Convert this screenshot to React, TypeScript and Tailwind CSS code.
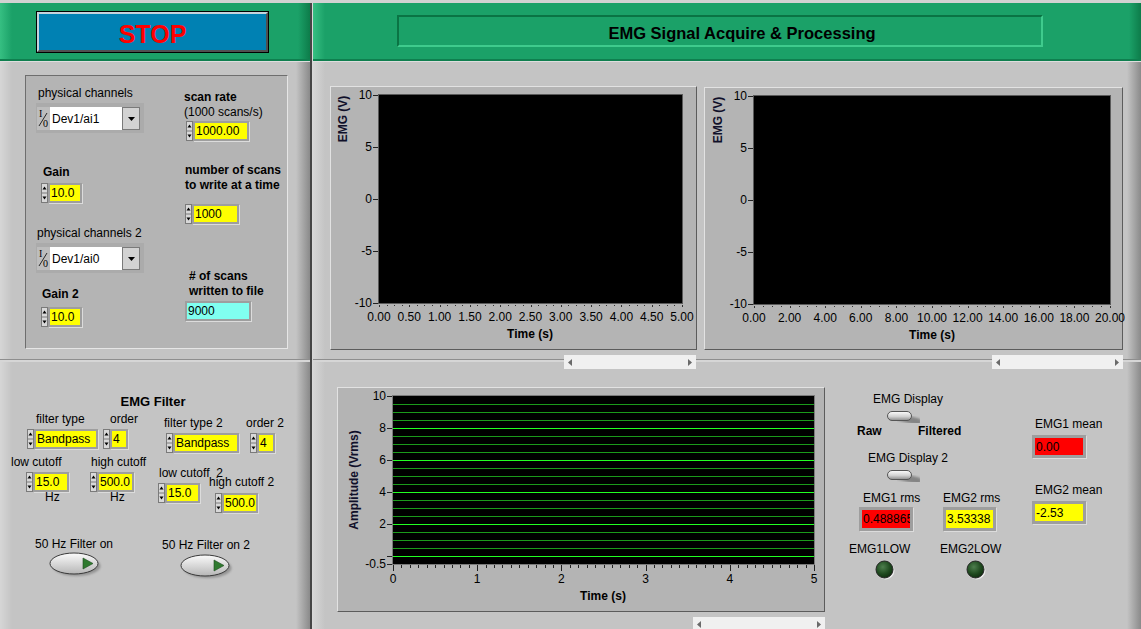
import React from 'react';

// LabVIEW style front panel: EMG acquisition

const PANE =
  'bg-[linear-gradient(to_right,#d6d6d6,#c4c4c4_12px,#c4c4c4_calc(100%_-_14px),#8a8a8a)]';
const GREEN =
  'bg-[linear-gradient(to_right,#36bf82,#1ba168_12px,#1ba168_calc(100%_-_12px),#0d7c4a)]';

function Spinner({ h = 20 }: { h?: number }) {
  const m = h / 2;
  const q = m / 2;
  return (
    <svg width={7} height={h} className="block shrink-0">
      <rect x={0.5} y={0.5} width={6} height={h - 1} fill="#d8d8d8" stroke="#7a7a7a" />
      <line x1={0} x2={7} y1={m} y2={m} stroke="#7a7a7a" />
      <polygon points={`1.5,${q + 1.5} 3.5,${q - 1.5} 5.5,${q + 1.5}`} fill="#000" />
      <polygon points={`1.5,${m + q - 1.5} 3.5,${m + q + 1.5} 5.5,${m + q - 1.5}`} fill="#000" />
    </svg>
  );
}

function Field({
  size,
  bg = 'bg-[#ffff00]',
  thick = false,
  children,
  className = '',
}: {
  size: string;
  bg?: string;
  thick?: boolean;
  children?: React.ReactNode;
  className?: string;
}) {
  return (
    <div
      className={`${size} ${thick ? 'border-[3px]' : 'border-2'} border-[#9e9e9e] shadow-[1px_1px_0_#dcdcdc] ${bg} flex items-center overflow-hidden whitespace-nowrap pl-[1px] text-[12px] leading-none text-black ${className}`}
    >
      {children}
    </div>
  );
}

function Num({ fw, value, className = '' }: { fw: string; value: string; className?: string }) {
  return (
    <div className={`flex ${className}`}>
      <Spinner h={20} />
      <Field size={`${fw} h-[20px]`}>{value}</Field>
    </div>
  );
}

function IORing({ value, className = '' }: { value: string; className?: string }) {
  return (
    <div className={`flex w-[108px] h-[30px] bg-[#ababab] pt-[4px] pb-[3px] pl-[1px] pr-[4px] ${className}`}>
      <svg width={13} height={23} className="block bg-[#bdbdbd] shrink-0">
        <text x={2} y={10} fontSize={10} fontFamily="Liberation Serif, serif" fill="#000">
          I
        </text>
        <line x1={2} y1={19} x2={10} y2={6} stroke="#000" strokeWidth={0.8} />
        <text x={6} y={20} fontSize={10} fontFamily="Liberation Serif, serif" fill="#000">
          0
        </text>
      </svg>
      <div className="w-[72px] bg-white flex items-center pl-[2px] text-[12px] text-black">{value}</div>
      <div className="w-[18px] bg-[#d2d2d2] border border-[#7a7a7a] flex items-center justify-center">
        <svg width={7} height={4}>
          <polygon points="0,0 7,0 3.5,4" fill="#000" />
        </svg>
      </div>
    </div>
  );
}

function HScroll({ className }: { className: string }) {
  return (
    <div className={`absolute z-10 h-[14px] bg-[#f0f0f0] flex items-center justify-between px-[4px] ${className}`}>
      <svg width={4} height={7}>
        <polygon points="4,0 0,3.5 4,7" fill="#6a6a6a" />
      </svg>
      <svg width={4} height={7}>
        <polygon points="0,0 4,3.5 0,7" fill="#6a6a6a" />
      </svg>
    </div>
  );
}

function WaveGraph(p: {
  x0: number;
  y0: number;
  w: number;
  h: number;
  l: number;
  t: number;
  r: number;
  b: number;
  xs: string[];
  ytx: number;
  yty: number;
  ttx: number;
  size: string;
  scroll: string;
}) {
  const vw = p.w - 2;
  const vh = p.h - 2;
  const yv = (v: number) => p.t + ((10 - v) / 20) * (p.b - p.t);
  const step = (p.r - p.l) / (p.xs.length - 1);
  const dots = [];
  for (let i = 0; i <= (p.xs.length - 1) * 4; i++) {
    const x = Math.round(p.l + (i * step) / 4);
    dots.push(<rect key={i} x={x} y={p.b + 2} width={1} height={i % 4 === 0 ? 2 : 1} fill="#333" />);
  }
  return (
    <div
      className={`relative border border-t-[#e2e2e2] border-l-[#e2e2e2] border-b-[#5c5c5c] border-r-[#5c5c5c] bg-[#b4b4b4] ${p.size}`}
    >
      <svg width={vw} height={vh} viewBox={`${p.x0 + 1} ${p.y0 + 1} ${vw} ${vh}`} className="block overflow-visible">
        <rect x={p.l - 0.5} y={p.t - 0.5} width={p.r - p.l + 1} height={p.b - p.t + 1} fill="#000" stroke="#5a5a5a" />
        {[10, 5, 0, -5, -10].map((v) => (
          <g key={v}>
            <line x1={p.l - 6} x2={p.l - 1} y1={Math.round(yv(v)) + 0.5} y2={Math.round(yv(v)) + 0.5} stroke="#222" />
            <text x={p.l - 7} y={yv(v) + 4} fontSize={12} textAnchor="end" fill="#000">
              {v}
            </text>
          </g>
        ))}
        {dots}
        {p.xs.map((s, i) => (
          <text key={s} x={p.l + i * step} y={p.b + 18} fontSize={12} textAnchor="middle" fill="#000">
            {s}
          </text>
        ))}
        <text
          x={p.ytx}
          y={p.yty}
          fontSize={12}
          fontWeight="bold"
          textAnchor="middle"
          dominantBaseline="central"
          transform={`rotate(-90 ${p.ytx} ${p.yty})`}
          fill="#10102a"
        >
          EMG (V)
        </text>
        <text x={p.ttx} y={p.b + 35} fontSize={12} fontWeight="bold" textAnchor="middle" fill="#000">
          Time (s)
        </text>
      </svg>
      <HScroll className={p.scroll} />
    </div>
  );
}

function AmpChart() {
  const x0 = 337;
  const y0 = 387;
  const vw = 486;
  const vh = 223;
  const l = 393;
  const t = 396;
  const r = 814;
  const b = 564;
  const yv = (v: number) => t + (10 - v) * 16;
  const lines = [];
  for (let k = 19; k >= 0; k--) {
    const v = k / 2;
    const bright = v % 2 === 0;
    lines.push(
      <line
        key={k}
        x1={l}
        x2={r}
        y1={yv(v) + 0.5}
        y2={yv(v) + 0.5}
        stroke={bright ? '#22ff22' : '#1b9a1b'}
        strokeWidth={1}
      />,
    );
  }
  const xt = [];
  for (let i = 0; i <= 50; i++) {
    const x = Math.round(l + (i * (r - l)) / 50) + 0.5;
    xt.push(<line key={i} x1={x} x2={x} y1={b + 1} y2={b + (i % 10 === 0 ? 7 : 4)} stroke="#222" />);
  }
  return (
    <div className="relative w-[488px] h-[225px] border border-t-[#e2e2e2] border-l-[#e2e2e2] border-b-[#5c5c5c] border-r-[#5c5c5c] bg-[#b4b4b4]">
      <svg width={vw} height={vh} viewBox={`${x0 + 1} ${y0 + 1} ${vw} ${vh}`} className="block">
        <rect x={l - 0.5} y={t - 0.5} width={r - l + 1} height={b - t + 1} fill="#000" stroke="#7a7a7a" />
        {lines}
        {[10, 8, 6, 4, 2, 0, -0.5].map((v) => (
          <g key={v}>
            <line x1={l - 6} x2={l - 1} y1={yv(v) + 0.5} y2={yv(v) + 0.5} stroke="#222" />
            {v !== 0 && (
              <text x={l - 7} y={yv(v) + 4} fontSize={12} textAnchor="end" fill="#000">
                {v}
              </text>
            )}
          </g>
        ))}
        {xt}
        {[0, 1, 2, 3, 4, 5].map((v) => (
          <text key={v} x={l + (v * (r - l)) / 5} y={583} fontSize={12} textAnchor="middle" fill="#000">
            {v}
          </text>
        ))}
        <text
          x={354}
          y={480}
          fontSize={12}
          fontWeight="bold"
          textAnchor="middle"
          dominantBaseline="central"
          transform="rotate(-90 354 480)"
          fill="#10102a"
        >
          Amplitude (Vrms)
        </text>
        <text x={603} y={600} fontSize={12} fontWeight="bold" textAnchor="middle" fill="#000">
          Time (s)
        </text>
      </svg>
      <HScroll className="left-[355px] top-[229px] w-[132px] h-[12px]" />
    </div>
  );
}

function Oval({ id, className = '' }: { id: string; className?: string }) {
  return (
    <svg width={56} height={26} className={`block ${className}`}>
      <defs>
        <linearGradient id={id} x1="0" y1="0" x2="0" y2="1">
          <stop offset="0" stopColor="#fbfbfb" />
          <stop offset="1" stopColor="#b6b6b6" />
        </linearGradient>
        <filter id={`${id}b`}>
          <feGaussianBlur stdDeviation="1.2" />
        </filter>
      </defs>
      <ellipse cx={28.5} cy={14} rx={24} ry={10} fill="#6a6a6a" opacity={0.55} filter={`url(#${id}b)`} />
      <ellipse cx={26} cy={11.5} rx={24} ry={10.5} fill={`url(#${id})`} stroke="#3a3a3a" />
      <polygon points="35,6 45,11.5 35,17" fill="#2f7a2f" stroke="#1c4a1c" strokeWidth={0.6} />
    </svg>
  );
}

function Toggle({ id, className = '' }: { id: string; className?: string }) {
  return (
    <svg width={40} height={15} className={`block overflow-visible ${className}`}>
      <defs>
        <linearGradient id={id} x1="0" y1="0" x2="0" y2="1">
          <stop offset="0" stopColor="#fdfdfd" />
          <stop offset="0.55" stopColor="#d2d2d2" />
          <stop offset="1" stopColor="#8c8c8c" />
        </linearGradient>
        <filter id={`${id}b`}>
          <feGaussianBlur stdDeviation="1.3" />
        </filter>
      </defs>
      <path d="M14 8 L33 13" stroke="#7a7a7a" strokeWidth={7} strokeLinecap="round" opacity={0.85} filter={`url(#${id}b)`} />
      <rect x={2.5} y={2.5} width={24} height={9} rx={4.5} fill={`url(#${id})`} stroke="#555" />
    </svg>
  );
}

function Led({ id, className = '' }: { id: string; className?: string }) {
  return (
    <svg width={22} height={22} className={`block ${className}`}>
      <defs>
        <radialGradient id={id} cx="0.4" cy="0.35" r="0.7">
          <stop offset="0" stopColor="#4e7e4e" />
          <stop offset="0.6" stopColor="#1f4a1f" />
          <stop offset="1" stopColor="#0e2a0e" />
        </radialGradient>
      </defs>
      <circle cx={11.5} cy={11.5} r={9} fill="#ececec" />
      <circle cx={10.5} cy={10.5} r={8.5} fill={`url(#${id})`} stroke="#262626" />
    </svg>
  );
}

export default function App() {
  const xs1 = ['0.00', '0.50', '1.00', '1.50', '2.00', '2.50', '3.00', '3.50', '4.00', '4.50', '5.00'];
  const xs2 = ['0.00', '2.00', '4.00', '6.00', '8.00', '10.00', '12.00', '14.00', '16.00', '18.00', '20.00'];

  return (
    <div className="w-[1141px] h-[629px] overflow-hidden flex flex-col bg-[#c4c4c4] text-black text-[12px] whitespace-nowrap font-['Liberation_Sans',Arial,sans-serif]">
      <div className="h-[3px] bg-[#d2d2d2]" />
      <div className="flex flex-1">
        {/* Left column */}
        <div className="w-[310px] flex flex-col">
          <div className={`h-[58px] ${GREEN} border-b-2 border-[#0f7f4f] pl-[36px] pt-[8px]`}>
            <div className="w-[233px] h-[42px] border border-black">
              <div className="h-full border-2 border-t-[#c4d4dc] border-l-[#c4d4dc] border-b-[#505050] border-r-[#505050] bg-[#0081b3] flex items-center justify-center pt-[5px] text-[#ff0000] font-bold text-[25px] leading-none">
                STOP
              </div>
            </div>
          </div>

          {/* acquisition settings */}
          <div className={`h-[298px] border-t border-[#dedede] ${PANE} pl-[25px] pt-[13px]`}>
            <div className="w-[263px] h-[274px] border border-t-[#6e6e6e] border-l-[#6e6e6e] border-b-[#e6e6e6] border-r-[#e6e6e6] bg-[#b4b4b4] flex">
              <div className="w-[158px] pl-[10px] flex flex-col items-start leading-[14px]">
                <div className="mt-[10px] ml-[2px]">physical channels</div>
                <IORing className="mt-[3px]" value="Dev1/ai1" />
                <div className="mt-[32px] ml-[7px] font-bold">Gain</div>
                <Num className="mt-[4px] ml-[5px]" fw="w-[34px]" value="10.0" />
                <div className="mt-[23px] ml-[1px]">physical channels 2</div>
                <IORing className="mt-[3px]" value="Dev1/ai0" />
                <div className="mt-[14px] ml-[6px] font-bold">Gain 2</div>
                <Num className="mt-[6px] ml-[5px]" fw="w-[34px]" value="10.0" />
              </div>
              <div className="flex flex-col items-start leading-[15px]">
                <div className="mt-[14px] font-bold">scan rate</div>
                <div>(1000 scans/s)</div>
                <Num className="mt-[1px] ml-[2px]" fw="w-[56px]" value="1000.00" />
                <div className="mt-[22px] ml-[1px] font-bold">
                  number of scans
                  <br />
                  to write at a time
                </div>
                <Num className="mt-[11px] ml-[1px]" fw="w-[47px]" value="1000" />
                <div className="mt-[45px] ml-[5px] font-bold">
                  # of scans
                  <br />
                  written to file
                </div>
                <Field className="mt-[2px] ml-[1px]" size="w-[66px] h-[20px]" bg="bg-[#80fff0]">
                  9000
                </Field>
              </div>
            </div>
          </div>

          <div className="h-[3px] border-t border-[#8e8e8e] bg-[#d6d6d6]" />

          {/* EMG filter */}
          <div className={`flex-1 flex flex-col ${PANE}`}>
            <div className="mt-[33px] w-[306px] text-center font-bold text-[13px] leading-[14px]">EMG Filter</div>
            <div className="flex leading-[14px]">
              <div className="w-[155px] flex flex-col items-start">
                <div className="mt-[3px] flex">
                  <span className="ml-[36px] w-[74px]">filter type</span>
                  <span>order</span>
                </div>
                <div className="mt-[3px] flex">
                  <Num className="ml-[27px]" fw="w-[64px]" value="Bandpass" />
                  <Num className="ml-[5px]" fw="w-[18px]" value="4" />
                </div>
                <div className="mt-[6px] flex">
                  <span className="ml-[11px] w-[80px]">low cutoff</span>
                  <span>high cutoff</span>
                </div>
                <div className="mt-[3px] flex">
                  <Num className="ml-[26px]" fw="w-[36px]" value="15.0" />
                  <Num className="ml-[21px]" fw="w-[37px]" value="500.0" />
                </div>
                <div className="mt-[-1px] flex leading-[12px]">
                  <span className="ml-[45px] w-[65px]">Hz</span>
                  <span>Hz</span>
                </div>
                <div className="mt-[34px] ml-[35px]">50 Hz Filter on</div>
                <Oval id="ov1" className="mt-[1px] ml-[48px]" />
              </div>
              <div className="flex-1 flex flex-col items-start">
                <div className="mt-[7px] flex">
                  <span className="ml-[9px] w-[82px]">filter type 2</span>
                  <span>order 2</span>
                </div>
                <div className="mt-[3px] flex">
                  <Num className="ml-[11px]" fw="w-[66px]" value="Bandpass" />
                  <Num className="ml-[11px]" fw="w-[18px]" value="4" />
                </div>
                <div className="flex items-start">
                  <div className="w-[54px] flex flex-col items-start">
                    <div className="mt-[13px] ml-[4px] whitespace-pre">low cutoff  2</div>
                    <Num className="mt-[3px] ml-[3px]" fw="w-[35px]" value="15.0" />
                  </div>
                  <div className="flex flex-col items-start">
                    <div className="mt-[22px]">high cutoff 2</div>
                    <Num className="mt-[4px] ml-[6px]" fw="w-[36px]" value="500.0" />
                  </div>
                </div>
                <div className="mt-[25px] ml-[7px]">50 Hz Filter on 2</div>
                <Oval id="ov2" className="mt-[2px] ml-[24px]" />
              </div>
            </div>
          </div>
        </div>

        {/* splitter */}
        <div className="w-[3px] border-l-2 border-[#454545] bg-[#d8d8d8]" />

        {/* Right column */}
        <div className="flex-1 flex flex-col">
          <div className={`h-[58px] ${GREEN} border-b-2 border-[#0f7f4f] pl-[84px] pt-[12px]`}>
            <div className="w-[646px] h-[32px] border-2 border-t-[#0a7444] border-l-[#0a7444] border-b-[#3fcb8d] border-r-[#3fcb8d] flex items-center justify-center pl-[44px] pt-[4px] font-bold text-[16.5px] leading-none text-black">
              EMG Signal Acquire &amp; Processing
            </div>
          </div>

          <div className={`h-[298px] border-t border-[#dedede] ${PANE} flex items-start pl-[17px] pt-[24px]`}>
            <WaveGraph
              x0={330}
              y0={86}
              w={367}
              h={264}
              l={379}
              t={95}
              r={682}
              b={303}
              xs={xs1}
              ytx={343}
              yty={119}
              ttx={530}
              size="w-[367px] h-[264px]"
              scroll="left-[233px] top-[268px] w-[132px]"
            />
            <div className="ml-[7px] mt-[1px]">
              <WaveGraph
                x0={704}
                y0={87}
                w={419}
                h={263}
                l={754}
                t={96}
                r={1110}
                b={304}
                xs={xs2}
                ytx={718}
                yty={120}
                ttx={932}
                size="w-[419px] h-[263px]"
                scroll="left-[287px] top-[267px] w-[131px]"
              />
            </div>
          </div>

          <div className="h-[3px] border-t border-[#8e8e8e] bg-[#d6d6d6]" />

          <div className={`flex-1 flex items-start ${PANE} leading-[14px]`}>
            <div className="ml-[24px] mt-[25px]">
              <AmpChart />
            </div>

            <div className="ml-[24px] w-[150px] flex flex-col items-start">
              <div className="mt-[30px] ml-[24px]">EMG Display</div>
              <Toggle id="tg1" className="mt-[3px] ml-[36px]" />
              <div className="flex font-bold">
                <span className="ml-[8px] w-[61px]">Raw</span>
                <span>Filtered</span>
              </div>
              <div className="mt-[13px] ml-[19px]">EMG Display 2</div>
              <Toggle id="tg2" className="mt-[3px] ml-[36px]" />
              <div className="mt-[8px] flex">
                <div className="ml-[10px] w-[84px] flex flex-col items-start">
                  <span className="ml-[4px]">EMG1 rms</span>
                  <Field className="mt-[2px]" size="w-[54px] h-[24px]" bg="bg-[#ff0000]" thick>
                    0.488865
                  </Field>
                </div>
                <div className="flex flex-col items-start">
                  <span>EMG2 rms</span>
                  <Field className="mt-[2px]" size="w-[53px] h-[24px]" thick>
                    3.53338
                  </Field>
                </div>
              </div>
              <div className="mt-[11px] flex">
                <span className="w-[91px]">EMG1LOW</span>
                <span>EMG2LOW</span>
              </div>
              <div className="mt-[3px] flex">
                <Led id="led1" className="ml-[25px]" />
                <Led id="led2" className="ml-[69px]" />
              </div>
            </div>

            <div className="ml-[33px] flex flex-col items-start">
              <div className="mt-[55px] ml-[3px]">EMG1 mean</div>
              <Field className="mt-[4px]" size="w-[54px] h-[23px]" bg="bg-[#ff0000]" thick>
                0.00
              </Field>
              <div className="mt-[25px] ml-[3px]">EMG2 mean</div>
              <Field className="mt-[4px]" size="w-[54px] h-[23px]" thick>
                -2.53
              </Field>
            </div>
          </div>
        </div>
      </div>
    </div>
  );
}
